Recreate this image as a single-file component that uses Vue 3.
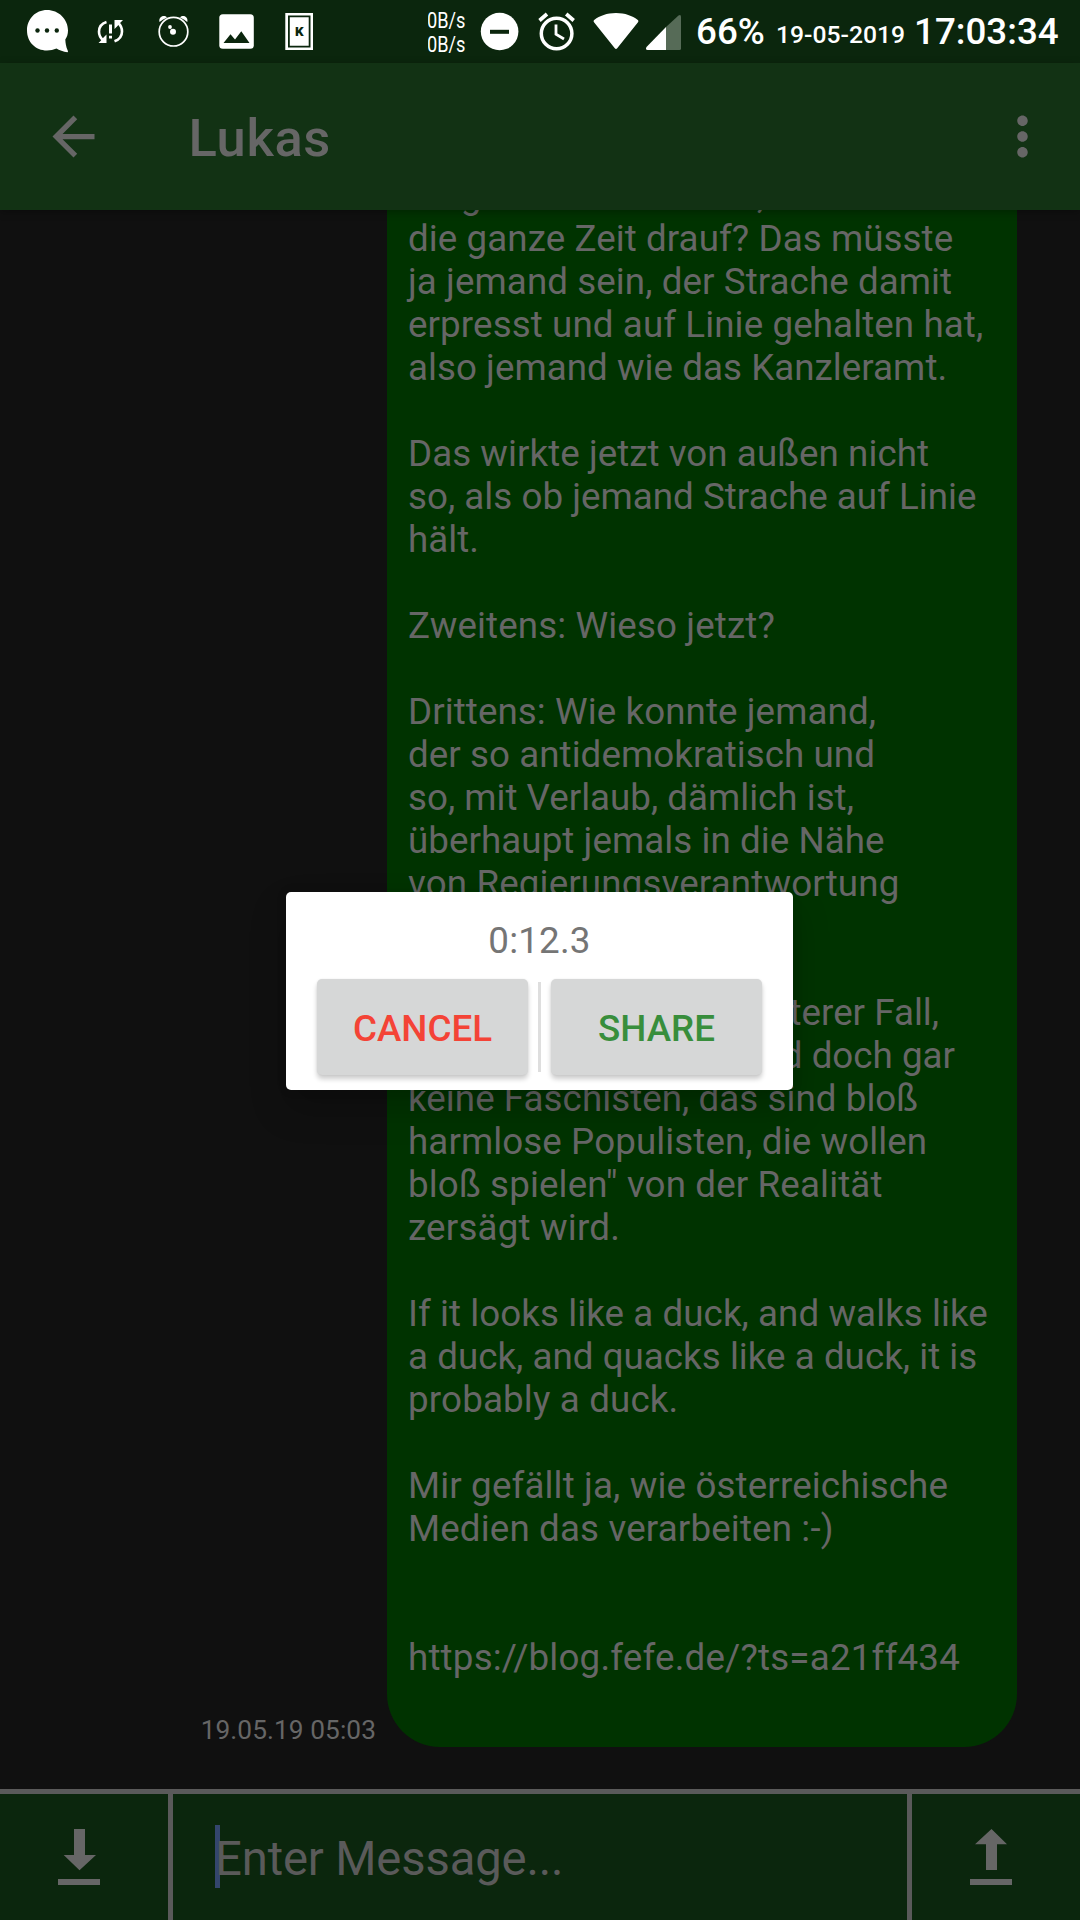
<script setup>
// s: letter spacing in px, w: fixed width of a line set flush right
const lines = [
  { t: 'aufgenommen wurde, wer saß da', s: 0.08 },
  { t: 'die ganze Zeit drauf? Das müsste', s: 0.07 },
  { t: 'ja jemand sein, der Strache damit', s: 0.07 },
  { t: 'erpresst und auf Linie gehalten hat,', s: 0.09 },
  { t: 'also jemand wie das Kanzleramt.', s: 0.03 },
  { t: '' },
  { t: 'Das wirkte jetzt von außen nicht', s: 0.04 },
  { t: 'so, als ob jemand Strache auf Linie', s: 0.02 },
  { t: 'hält.' },
  { t: '' },
  { t: 'Zweitens: Wieso jetzt?', s: 0.12 },
  { t: '' },
  { t: 'Drittens: Wie konnte jemand,', s: 0.07 },
  { t: 'der so antidemokratisch und', s: 0.05 },
  { t: 'so, mit Verlaub, dämlich ist,' },
  { t: 'überhaupt jemals in die Nähe', s: 0.05 },
  { t: 'von Regierungsverantwortung', s: 0.13 },
  { t: 'kommen?' },
  { t: '' },
  { t: 'Und das ist ein weiterer Fall,', w: 531 },
  { t: 'in dem "aber das sind doch gar', w: 547 },
  { t: 'keine Faschisten, das sind bloß', s: 0.04 },
  { t: 'harmlose Populisten, die wollen', s: 0.08 },
  { t: 'bloß spielen" von der Realität', s: 0.12 },
  { t: 'zersägt wird.', s: 0.18 },
  { t: '' },
  { t: 'If it looks like a duck, and walks like', s: 0.06 },
  { t: 'a duck, and quacks like a duck, it is', s: 0.02 },
  { t: 'probably a duck.', s: 0.15 },
  { t: '' },
  { t: 'Mir gefällt ja, wie österreichische', s: 0.13 },
  { t: 'Medien das verarbeiten :-)', s: 0.14 },
  { t: '' },
  { t: '' },
  { t: 'https://blog.fefe.de/?ts=a21ff434', s: 0.18 },
  { t: '' },
]
const lineStyle = (l) => ({
  letterSpacing: l.s ? l.s + 'px' : null,
  width: l.w ? l.w + 'px' : null,
})
</script>

<template>
  <div class="screen">
    <header class="status">
      <svg width="84" height="63" viewBox="0 0 84 63">
        <path fill="#fff" d="M47 10C35.500 10 27 19 27 30.500S35.500 50.500 47 50.500C50.500 50.500 53.500 49.800 56.500 48.500C59 50 63.500 52 67.500 52.300C68.300 52 68 51 67.500 50C66 46.500 65.500 43 65.300 39.500C67 37 68 34 68 30.500C68 19 58.500 10 47 10Z" />
        <g fill="#0b260d"><circle cx="37.500" cy="30.500" r="2.200" /><circle cx="47" cy="30.500" r="2.200" /><circle cx="56.800" cy="30.500" r="2.200" /></g>
      </svg>
      <svg width="56" height="63" viewBox="84 0 56 63">
        <g fill="none" stroke="#fff" stroke-width="2.600">
          <path d="M106.500 22C101.500 23.500 99 27.500 99 31.800C99 35.500 100.500 38 103 40.300" />
          <path d="M114.500 41.300C119.500 39.500 122 36 122 31.500C122 28 120.500 25 118 22.800" />
        </g>
        <path fill="#fff" d="M98.500 43H106.500V34.500L103.500 37.500L101 40.500ZM114.500 20H123L120 23L117.500 26L114.500 29ZM109 24.500H112V33.500H109ZM109 35.800H112V38.500H109Z" />
      </svg>
      <svg width="66" height="63" viewBox="140 0 66 63">
        <circle cx="173.500" cy="31.700" r="14.300" fill="none" stroke="#fff" stroke-width="1.700" />
        <path fill="#fff" d="M159.500 22C158.500 18 162 15 166 16.500L167 17.500C163.500 19 161.500 20.500 159.500 22ZM187.300 22C188.300 18 185 15 181 16.500L180 17.500C183.500 19 185.500 20.500 187.300 22Z" />
        <circle cx="173" cy="31.700" r="3" fill="#fff" /><circle cx="170" cy="27" r="1.900" fill="#fff" />
      </svg>
      <svg width="64" height="63" viewBox="206 0 64 63">
        <rect x="219.300" y="14.300" width="34.500" height="34.500" rx="3.500" fill="#fff" />
        <path fill="#0b260d" d="M223.500 43L230.500 34.200L235 39.500L241.300 31.300L249.500 43Z" />
      </svg>
      <svg width="158" height="63" viewBox="270 0 158 63">
        <path fill="#fff" fill-rule="evenodd" d="M285.300 13H313V50H285.300ZM287.500 15.300V47.700H310.800V15.300Z" />
        <path fill="#fff" d="M287 14.500H311.500V48.500H287Z" />
        <path fill="none" stroke="#0b260d" stroke-width="1.800" d="M288.900 16.400H309.600V46.600H288.900Z" />
        <text x="299.400" y="36" text-anchor="middle" font-size="13.500" font-weight="900" fill="#0b260d">K</text>
      </svg>
      <svg width="44" height="63" viewBox="428 0 44 63">
        <g fill="#fff" font-size="21.500" font-weight="400">
          <text x="427" y="28" textLength="38.500" lengthAdjust="spacingAndGlyphs">0B/s</text>
          <text x="427" y="52" textLength="38.500" lengthAdjust="spacingAndGlyphs">0B/s</text>
        </g>
      </svg>
      <svg width="56" height="63" viewBox="472 0 56 63">
        <circle cx="499.600" cy="31.500" r="18.800" fill="#fff" /><rect x="490" y="29.800" width="19" height="4" fill="#0b260d" />
      </svg>
      <svg width="56" height="63" viewBox="528 0 56 63">
        <g fill="none" stroke="#fff" stroke-width="3.500">
          <circle cx="556.600" cy="33.500" r="15.300" />
          <path stroke-width="3.700" d="M539.500 20.500L547 14M573.700 20.500L566.200 14" />
          <path stroke-width="2.800" d="M556 24.500V34.300L564 39" />
        </g>
      </svg>
      <svg width="58" height="63" viewBox="584 0 58 63">
        <path fill="#fff" d="M594.200 22.500C593.300 21.600 593.500 20.500 594.500 19.800C599.500 15.800 607 13 616 13S632.500 15.800 637.500 19.800C638.500 20.500 638.700 21.600 637.800 22.500L617.200 48.200C616.500 49.200 615.500 49.200 614.800 48.200Z" />
      </svg>
      <svg width="54" height="63" viewBox="642 0 54 63">
        <path fill="#566b57" d="M666 27L678.500 15.500Q681 13.800 681 17V48.500Q681 50 679.500 50H666Z" />
        <path fill="#fff" d="M666 27V50H647.500Q645 49.500 646.500 47Z" />
      </svg>
      <span class="big batt">66%</span>
      <span class="date">19-05-2019</span>
      <span class="big">17:03:34</span>
    </header>

    <nav class="bar">
      <svg width="63" height="63" viewBox="0 0 24 24" fill="#666"><path d="M20 11H7.830l5.590-5.590L12 4l-8 8 8 8 1.410-1.410L7.830 13H20v-2z" /></svg>
      <h1>Lukas</h1>
      <svg width="63" height="63" viewBox="0 0 24 24" fill="#666"><path d="M12 8c1.100 0 2-.9 2-2s-.9-2-2-2-2 .9-2 2 .9 2 2 2zm0 2c-1.100 0-2 .9-2 2s.9 2 2 2 2-.9 2-2-.9-2-2-2zm0 6c-1.100 0-2 .9-2 2s.9 2 2 2 2-.9 2-2-.9-2-2-2z" /></svg>
    </nav>

    <main class="chat">
      <time>19.05.19 05:03</time>
      <div class="bubble">
        <p v-for="(l, i) in lines" :key="i" :class="{ end: l.w }" :style="lineStyle(l)">{{ l.t }}</p>
      </div>
    </main>

    <footer class="compose">
      <div class="cell">
        <svg width="168" height="126" viewBox="0 1794 168 126" fill="#666"><path d="M74 1829H85V1855H96L79.500 1870.300L63.700 1855H74ZM58 1879H100V1885H58Z" /></svg>
      </div>
      <div class="field"><i class="caret"></i><span>Enter Message...</span></div>
      <div class="cell">
        <svg width="168" height="126" viewBox="912 1794 168 126" fill="#666"><path d="M991.500 1829L1007 1844.300H997V1870H986V1844.300H975ZM970 1879H1012V1885H970Z" /></svg>
      </div>
    </footer>

    <section class="dialog">
      <div class="timer">0:12.3</div>
      <div class="actions">
        <button class="cancel">CANCEL</button>
        <i class="rule"></i>
        <button class="share">SHARE</button>
      </div>
    </section>
  </div>
</template>

<style>
body { margin: 0; background: #101010; }
</style>

<style scoped>
.screen { position: relative; width: 1080px; height: 1920px; overflow: hidden; display: flex; flex-direction: column; background: #101010; font-family: Roboto, "Liberation Sans", sans-serif; }
svg { display: block; flex: none; }
.status { flex: none; height: 63px; display: flex; background: #0b260d; color: #fff; font-weight: 500; white-space: nowrap; }
.status span { line-height: 63px; }
.big { font-size: 36.750px; }
.batt { width: 80px; }
.date { width: 138px; font-size: 24.700px; padding-top: 3px; }
.bar { flex: none; height: 147px; box-sizing: border-box; padding: 0 26px 0 41.500px; display: flex; align-items: center; background: #123214; position: relative; z-index: 1; box-shadow: 0 2px 8px rgba(0, 0, 0, .3); }
h1 { flex: 1; margin: 2px 0 0 84px; font-size: 52.500px; line-height: 62px; font-weight: 500; letter-spacing: .6px; color: #666; }
.chat { flex: 1; min-height: 0; overflow: hidden; display: flex; justify-content: flex-end; align-items: flex-end; padding: 0 63px 42px 0; }
time { font-size: 26.250px; line-height: 31px; letter-spacing: .08px; color: #666; margin: 0 11px 1px 0; white-space: nowrap; }
.bubble { box-sizing: border-box; width: 630px; padding: 0 0 25px 21px; background: #003300; border-radius: 0 0 53px 53px; color: #666; font-size: 36.750px; line-height: 43px; }
.bubble p { margin: 0; height: 43px; white-space: nowrap; }
.bubble p.end { text-align: right; }
.compose { flex: none; height: 131px; box-sizing: border-box; border-top: 5px solid #5a5a5a; display: flex; background: #0b260d; }
.cell { width: 168px; }
.field { flex: 1; border: solid #5a5a5a; border-width: 0 5px; padding-left: 42px; display: flex; align-items: center; color: #5a5a5a; font-size: 47.250px; letter-spacing: -.16px; white-space: nowrap; }
.field span { margin-top: 3px; }
.caret { width: 5px; height: 63px; margin: -1px -5px 0 0; background: #34466d; }
.dialog { position: absolute; z-index: 2; left: 286px; top: 892px; width: 507px; height: 198px; box-sizing: border-box; padding: 27px 31px 0; background: #fff; border-radius: 5px; box-shadow: 0 18px 36px rgba(0, 0, 0, .22), 0 0 12px rgba(0, 0, 0, .08); }
.timer { text-align: center; font-size: 36.750px; line-height: 43px; letter-spacing: .2px; color: #757575; }
.actions { display: flex; justify-content: space-between; align-items: center; margin-top: 17px; }
button { width: 211px; height: 96px; padding: 2px 0 0; border: 0; border-radius: 5px; background: #d6d7d7; font: 500 36.750px Roboto, "Liberation Sans", sans-serif; box-shadow: 0 4px 5px rgba(0, 0, 0, .2), 0 0 2px rgba(0, 0, 0, .08); }
.cancel { color: #f44336; }
.share { color: #388e3c; }
.rule { width: 3px; height: 90px; background: #dedede; }
</style>
